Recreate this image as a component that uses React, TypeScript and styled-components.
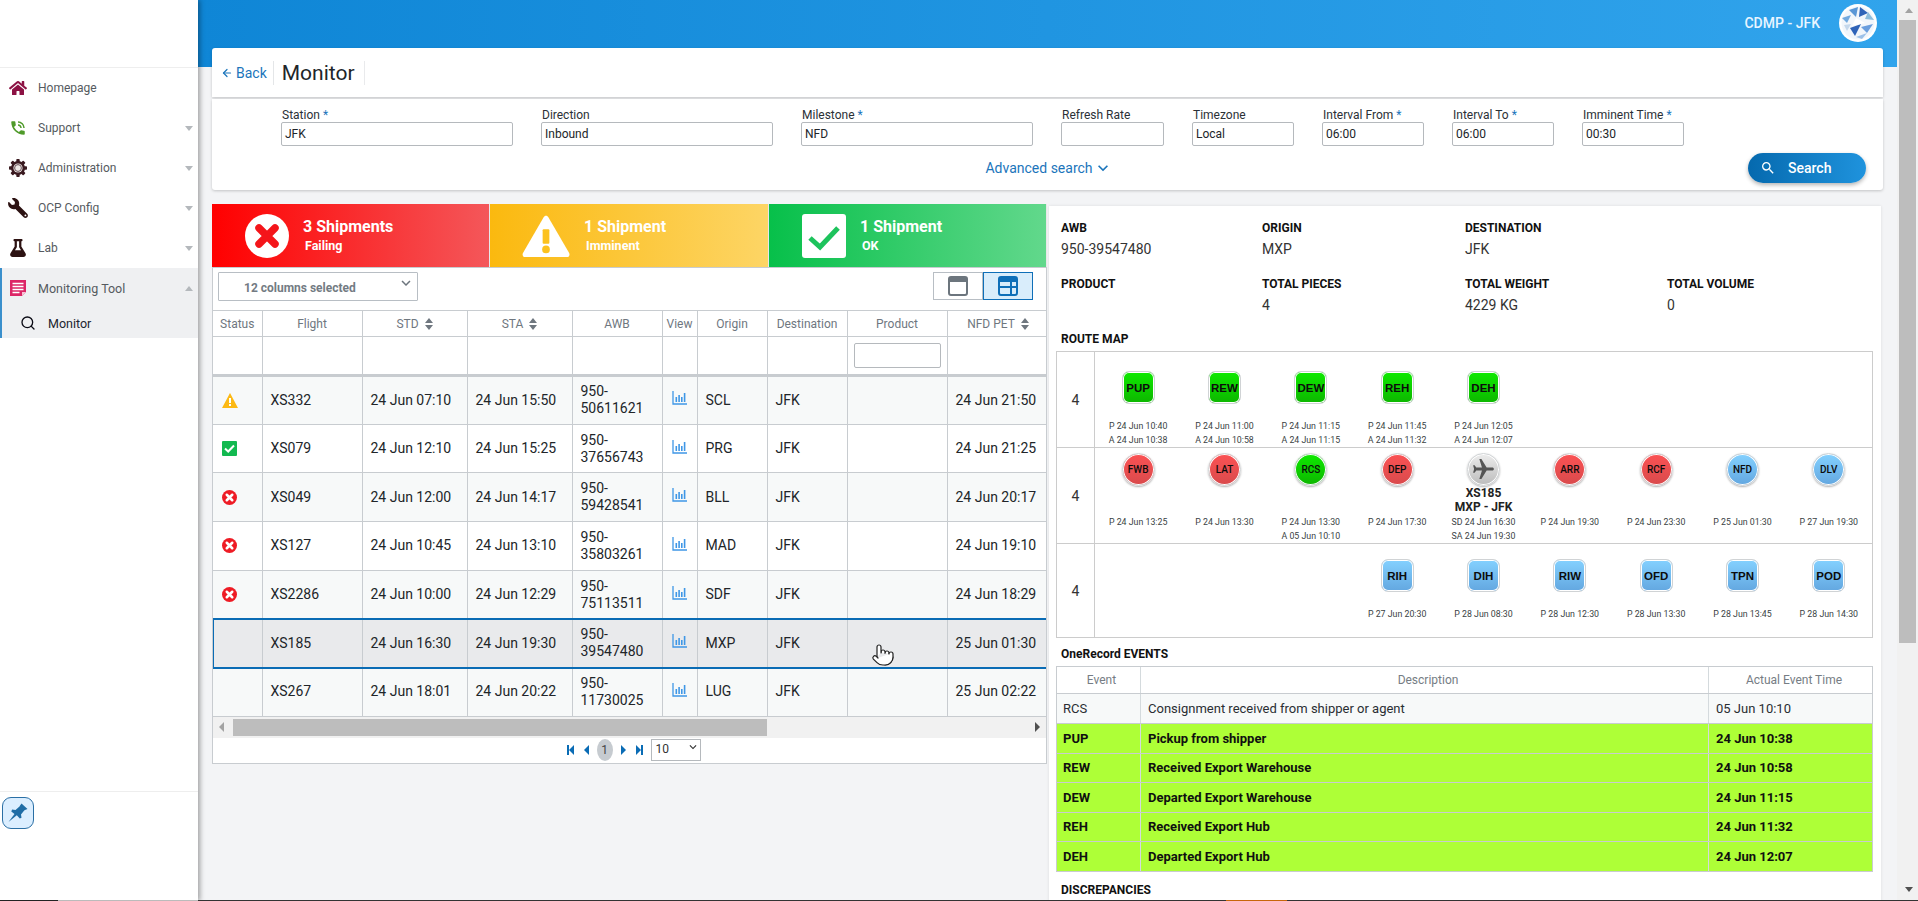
import React from "react";
import styled, { createGlobalStyle } from "styled-components";
import { FaHome, FaWrench, FaFlask } from "react-icons/fa";
import { MdPhoneInTalk, MdSearch, MdKeyboardArrowDown, MdFlight } from "react-icons/md";
import { Pointer, Search as SearchGlyph, ArrowLeft } from "lucide-react";

const Global = createGlobalStyle`
  html, body { margin: 0; padding: 0; height: 100%; overflow: hidden; background: #f3f4f6; }
  body { font-family: Roboto, "Liberation Sans", sans-serif; color: #212529; }
  * { box-sizing: border-box; }
`;

const Page = styled.div`
  position: relative;
  display: flex;
  width: 1918px;
  height: 901px;
  overflow: hidden;
`;

/* ---------- Sidebar ---------- */
const Sidebar = styled.aside`
  width: 198px;
  flex: none;
  height: 901px;
  background: #fff;
  display: flex;
  flex-direction: column;
  box-shadow: 2px 0 5px rgba(0, 0, 0, 0.35);
  z-index: 3;
`;
const SideTop = styled.div`
  height: 68px;
  flex: none;
  border-bottom: 1px solid #eeeeee;
`;
const MenuItem = styled.div`
  height: 40px;
  display: flex;
  align-items: center;
  font-size: 12px;
  color: #555a60;
`;
const MenuIcon = styled.span<{ $c: string; $flip?: boolean }>`
  width: 38px;
  flex: none;
  padding-left: 9px;
  display: flex;
  color: ${(p) => p.$c};
  font-size: 18px;
  & svg {
    ${(p) => (p.$flip ? "transform: scaleX(-1) scale(1.1);" : "")}
  }
`;
const MenuLabel = styled.span`
  flex: 1;
`;
const Caret = styled.i<{ $up?: boolean }>`
  width: 0;
  height: 0;
  margin-right: 5px;
  border-left: 4px solid transparent;
  border-right: 4px solid transparent;
  ${(p) => (p.$up ? "border-bottom: 5px solid #b4b8bc;" : "border-top: 5px solid #b4b8bc;")}
`;
const ActiveGroup = styled.div`
  background: #eff0f2;
  border-left: 2px solid #3a8fcc;
  margin: 0;
`;
const ActiveHead = styled(MenuItem)`
  margin-left: -2px;
  font-size: 12.5px;
`;
const SubItem = styled.div`
  height: 30px;
  display: flex;
  align-items: center;
  padding-left: 18px;
  gap: 12px;
  font-size: 12.5px;
  color: #1c2530;
`;
const SideSpacer = styled.div`
  flex: 1;
`;
const SideFoot = styled.div`
  height: 110px;
  flex: none;
  border-top: 1px solid #eeeeee;
  padding: 5px 2px;
`;
const PinButton = styled.div`
  width: 32px;
  height: 32px;
  border: 1px solid #2a6fa5;
  border-radius: 9px;
  background: #dbeeff;
  display: flex;
  align-items: center;
  justify-content: center;
`;

/* ---------- Main ---------- */
const Main = styled.main`
  width: 1699px;
  flex: none;
  height: 901px;
  overflow: hidden;
`;
const TopBar = styled.header`
  height: 67px;
  background: linear-gradient(90deg, #0f86d6 0%, #31a4ec 100%);
  display: flex;
  justify-content: flex-end;
  align-items: flex-start;
  padding: 4px 20px 0 0;
  gap: 19px;
  color: #e9f5ff;
`;
const UserText = styled.span`
  font-size: 14px;
  font-weight: 500;
  line-height: 38px;
`;
const Content = styled.div`
  margin-top: -19px;
  padding: 0 14px;
`;
const TitleCard = styled.div`
  height: 49px;
  background: #fff;
  border-radius: 3px 3px 0 0;
  box-shadow: 0 1px 3px rgba(0, 0, 0, 0.2);
  display: flex;
  align-items: center;
  padding-left: 9px;
`;
const BackLink = styled.span`
  display: flex;
  align-items: center;
  gap: 3px;
  font-size: 14px;
  color: #1b75bb;
  padding-right: 6px;
  height: 24px;
  border-right: 1px solid #e4e6e8;
`;
const PageTitle = styled.h1`
  margin: 0;
  font-size: 21px;
  font-weight: 400;
  color: #212529;
  padding: 0 8px;
  line-height: 24px;
  width: 91px;
  border-right: 1px solid #e9eaec;
`;
const FilterCard = styled.div`
  margin-top: 2px;
  height: 91px;
  background: #fff;
  border-radius: 0 0 3px 3px;
  box-shadow: 0 1px 3px rgba(0, 0, 0, 0.2);
  padding: 9px 17px 0 69px;
`;
const FieldRow = styled.div`
  display: flex;
  gap: 28px;
`;
const Field = styled.div<{ $w: number }>`
  width: ${(p) => p.$w}px;
  flex: none;
`;
const FieldLabel = styled.label`
  display: block;
  font-size: 12px;
  line-height: 14px;
  padding-left: 1px;
  color: #2b3036;
  & b {
    font-weight: 400;
    color: #1b75bb;
  }
`;
const FieldInput = styled.div`
  height: 24px;
  border: 1px solid #b5b9bd;
  border-radius: 2px;
  font-size: 12px;
  line-height: 22px;
  padding-left: 3px;
  color: #212529;
`;
const SearchRow = styled.div`
  margin-top: 7px;
  margin-left: -69px;
  display: grid;
  grid-template-columns: 1fr auto 1fr;
  align-items: center;
`;
const AdvLink = styled.span`
  grid-column: 2;
  margin-left: 20px;
  display: flex;
  align-items: center;
  gap: 0;
  font-size: 14px;
  color: #1b75bb;
`;
const SearchBtn = styled.button`
  grid-column: 3;
  justify-self: end;
  width: 118px;
  height: 30px;
  border: 0;
  border-radius: 15px;
  background: linear-gradient(90deg, #0569ae, #1f93dd);
  box-shadow: 0 2px 4px rgba(0, 0, 0, 0.3);
  color: #fff;
  font: 500 14px Roboto, sans-serif;
  display: flex;
  align-items: center;
  padding: 0 0 0 12px;
  gap: 12px;
`;
const Panels = styled.div`
  margin-top: 14px;
  display: flex;
  align-items: flex-start;
  gap: 2px;
`;

/* ---------- Left panel ---------- */
const LeftPanel = styled.section`
  position: relative;
  width: 835px;
  flex: none;
  background: #fff;
  border-bottom: 1px solid #c8ccd0;
`;
const Tiles = styled.div`
  display: flex;
  height: 64px;
  border-bottom: 1px solid #c8ccd0;
`;
const Tile = styled.div<{ $from: string; $to: string; $w: number; $pad: number }>`
  width: ${(p) => p.$w}px;
  flex: none;
  background: linear-gradient(90deg, ${(p) => p.$from}, ${(p) => p.$to});
  display: flex;
  align-items: center;
  padding-left: ${(p) => p.$pad}px;
  gap: 14px;
  color: #fff;
  border-right: 1px solid #e8e8e8;
`;
const TileText = styled.div`
  display: flex;
  flex-direction: column;
`;
const TileTitle = styled.span`
  font-size: 16px;
  font-weight: 700;
  line-height: 20px;
`;
const TileSub = styled.span`
  font-size: 12.5px;
  font-weight: 700;
  line-height: 17px;
  padding-left: 2px;
`;
const TableBox = styled.div`
  border-left: 1px solid #c8ccd0;
  border-right: 1px solid #c8ccd0;
`;
const Toolbar = styled.div`
  height: 42px;
  display: flex;
  justify-content: space-between;
  align-items: flex-start;
  padding: 4px 13px 0 5px;
`;
const ColumnSelect = styled.div`
  position: relative;
  width: 200px;
  height: 29px;
  border: 1px solid #b8bec4;
  border-radius: 1px;
  font-size: 12px;
  font-weight: 700;
  color: #737b83;
  line-height: 30px;
  padding-left: 25px;
  & svg {
    position: absolute;
    right: 2px;
    top: 1px;
    color: #6c757d;
  }
`;
const ViewToggle = styled.div`
  display: flex;
`;
const ViewBtn = styled.div<{ $on?: boolean }>`
  width: 50px;
  height: 28px;
  display: flex;
  align-items: center;
  justify-content: center;
  border: 1px solid ${(p) => (p.$on ? "#0f6fb8" : "#b8bec4")};
  background: ${(p) => (p.$on ? "#d9edfb" : "#fff")};
`;
const TableClip = styled.div`
  overflow: hidden;
`;
const Grid = styled.table`
  table-layout: fixed;
  width: 836px;
  border-collapse: collapse;
`;
const Th = styled.th`
  height: 26px;
  padding: 0;
  font-size: 12px;
  font-weight: 400;
  color: #6f777f;
  text-align: center;
  border: 1px solid #c8ccd0;
  &:first-child {
    border-left: 0;
  }
  white-space: nowrap;
`;
const SortGlyph = styled.svg`
  margin-left: 6px;
  vertical-align: -2px;
`;
const FilterCell = styled.td`
  height: 39px;
  padding: 0 6px;
  border: 1px solid #c8ccd0;
  border-bottom: 3px solid #c8ccd0;
  &:first-child {
    border-left: 0;
  }
`;
const FilterInput = styled.div`
  height: 25px;
  border: 1px solid #b5b9bd;
  border-radius: 2px;
  background: #fff;
`;
const Row = styled.tr<{ $alt?: boolean; $sel?: boolean }>`
  background: ${(p) => (p.$sel ? "#e9eaec" : p.$alt ? "#f7f9f9" : "#fff")};
  ${(p) => (p.$sel ? "outline: 2px solid #0a6cb5; outline-offset: -1px;" : "")}
`;
const Td = styled.td<{ $flush?: boolean }>`
  height: 48.7px;
  padding: 0 ${(p) => (p.$flush ? "0" : "8px")};
  font-size: 14px;
  line-height: 17px;
  color: #212529;
  border: 1px solid #c8ccd0;
  &:first-child {
    border-left: 0;
  }
  text-align: ${(p) => (p.$flush ? "center" : "left")};
`;
const StatusWrap = styled.span`
  display: flex;
  padding-left: 9px;
`;
const HScroll = styled.div`
  height: 21px;
  background: #f1f1f1;
  display: flex;
  align-items: center;
`;
const HArrow = styled.i<{ $dir: "l" | "r" }>`
  width: 0;
  height: 0;
  border-top: 5px solid transparent;
  border-bottom: 5px solid transparent;
  ${(p) => (p.$dir === "l" ? "border-right: 5px solid #a3a3a3; margin: 0 6px 0 6px;" : "border-left: 5px solid #505050; margin: 0 6px 0 auto;")}
`;
const HThumb = styled.div`
  width: 534px;
  height: 17px;
  margin-left: 3px;
  background: #bdbdbd;
`;
const Pager = styled.div`
  height: 25px;
  display: flex;
  align-items: center;
  justify-content: center;
  gap: 7px;
  padding-left: 8px;
`;
const PageChip = styled.span`
  width: 16px;
  height: 22px;
  border-radius: 50%;
  background: #c6cbd0;
  font-size: 12px;
  line-height: 22px;
  text-align: center;
  color: #444;
`;
const PageSize = styled.div`
  width: 50px;
  height: 22px;
  border: 1px solid #b5b9bd;
  font-size: 12px;
  line-height: 18px;
  padding-left: 4px;
  color: #333;
  display: flex;
  justify-content: space-between;
  margin-left: 1px;
`;
const HandCursor = styled.div`
  position: absolute;
  left: 659px;
  top: 439px;
  display: flex;
`;

/* ---------- Right panel ---------- */
const RightPanel = styled.section`
  width: 832px;
  flex: none;
  margin-top: 2px;
  background: #fff;
  height: 700px;
  padding: 0 7px;
  box-shadow: 0 0 3px rgba(0, 0, 0, 0.1);
`;
const InfoGrid = styled.div`
  display: grid;
  grid-template-columns: 201px 203px 202px 202px;
  padding: 14px 0 0 5px;
  row-gap: 13px;
`;
const InfoItem = styled.div`
  height: 43px;
`;
const InfoLabel = styled.div`
  font-size: 12px;
  font-weight: 700;
  line-height: 16px;
  color: #111;
`;
const InfoValue = styled.div`
  font-size: 14px;
  line-height: 17px;
  margin-top: 5px;
  color: #333;
`;
const SectionTitle = styled.h3<{ $top: number }>`
  margin: ${(p) => p.$top}px 0 0 5px;
  font-size: 12px;
  font-weight: 700;
  line-height: 16px;
  color: #111;
`;
const RouteTable = styled.div`
  margin-top: 4px;
  width: 817px;
  border: 1px solid #ccc;
`;
const RouteRow = styled.div<{ $h: number }>`
  display: flex;
  height: ${(p) => p.$h}px;
  & + & {
    border-top: 1px solid #ccc;
  }
`;
const RouteCount = styled.div`
  width: 38px;
  flex: none;
  border-right: 1px solid #ccc;
  display: flex;
  align-items: center;
  justify-content: center;
  font-size: 14px;
  color: #333;
`;
const RouteSteps = styled.div<{ $pad: number }>`
  flex: 1;
  display: grid;
  grid-template-columns: repeat(9, 1fr);
  padding-top: ${(p) => p.$pad}px;
`;
const Step = styled.div`
  display: flex;
  flex-direction: column;
  align-items: center;
`;
const Badge = styled.div<{ $round?: boolean; $from: string; $to: string }>`
  width: 33px;
  height: 33px;
  border-radius: ${(p) => (p.$round ? "50%" : "7px")};
  border: 1px solid #d0d3d5;
  box-shadow: inset 0 0 0 1px #fff ${(p) => (p.$round ? ", 0 1px 2px rgba(0,0,0,.3)" : "")};
  background: linear-gradient(180deg, ${(p) => p.$from}, ${(p) => p.$to});
  display: flex;
  align-items: center;
  justify-content: center;
  font-family: ${(p) => (p.$round ? "Roboto, sans-serif" : '"Liberation Sans", sans-serif')};
  font-weight: ${(p) => (p.$round ? 500 : 700)};
  font-size: ${(p) => (p.$round ? "10px" : "11.5px")};
  color: #0c0c0c;
  flex: none;
`;
const FlightName = styled.div`
  font-size: 12px;
  font-weight: 700;
  line-height: 14px;
  text-align: center;
  color: #222;
  white-space: nowrap;
`;
const Times = styled.div<{ $top: number }>`
  margin-top: ${(p) => p.$top}px;
  font-size: 8.8px;
  line-height: 14px;
  color: #3a3f44;
  text-align: center;
  white-space: nowrap;
`;
const EventTable = styled.div`
  margin-top: 4px;
  width: 817px;
  border: 1px solid #c8ccd0;
`;
const EventRow = styled.div<{ $green?: boolean; $head?: boolean; $h?: number }>`
  display: grid;
  grid-template-columns: 83px 568px 1fr;
  height: ${(p) => p.$h ?? 29.5}px;
  align-items: stretch;
  font-size: ${(p) => (p.$head ? "12px" : "13px")};
  font-weight: ${(p) => (p.$green ? 700 : 400)};
  color: ${(p) => (p.$head ? "#767d84" : p.$green ? "#101010" : "#2a2e33")};
  background: ${(p) => (p.$green ? "#aeff37" : p.$head ? "#fff" : "#f7f9f9")};
  & + & {
    border-top: 1px solid #c8ccd0;
  }
`;
const EventCell = styled.div<{ $center?: boolean }>`
  display: flex;
  align-items: center;
  padding-left: 6px;
  justify-content: ${(p) => (p.$center ? "center" : "flex-start")};
  & + & {
    border-left: 1px solid #d4dadd;
    padding-left: ${(p) => (p.$center ? "0" : "7px")};
  }
`;

/* ---------- Page scrollbar and the bottom sliver ---------- */
const PageScroll = styled.div`
  width: 21px;
  flex: none;
  height: 901px;
  background: #f1f1f1;
  display: flex;
  flex-direction: column;
  align-items: flex-end;
`;
const ScrollArrow = styled.i<{ $down?: boolean }>`
  display: block;
  margin: ${(p) => (p.$down ? "auto 5px 9px 0" : "8px 5px 0 0")};
  width: 0;
  height: 0;
  border-left: 4px solid transparent;
  border-right: 4px solid transparent;
  ${(p) => (p.$down ? "border-top: 5px solid #505050;" : "border-bottom: 5px solid #a3a3a3;")}
`;
const ScrollThumb = styled.div`
  width: 17px;
  height: 623px;
  margin: 7px 2px 0 0;
  background: #bdbdbd;
`;
const Sliver = styled.div`
  position: absolute;
  left: 0;
  right: 0;
  bottom: 0;
  height: 1px;
  display: flex;
  z-index: 5;
`;
const SliverPart = styled.i<{ $w?: number; $c: string }>`
  display: block;
  background: ${(p) => p.$c};
  ${(p) => (p.$w ? `width: ${p.$w}px; flex: none;` : "flex: 1;")}
`;

/* ---------- Drawings ---------- */
const GearIcon = () => (
  <svg width="18" height="18" viewBox="0 0 18 18">
    <g fill="#3a1a20">
      {[0, 45, 90, 135, 180, 225, 270, 315].map((a) => (
        <rect key={a} x="7.300" y="0" width="3.400" height="4" rx="0.800" transform={`rotate(${a} 9 9)`} />
      ))}
      <circle cx="9" cy="9" r="7" />
    </g>
    <circle cx="9" cy="9" r="4.600" fill="#efe9e6" />
    <circle cx="9" cy="9" r="3.400" fill="none" stroke="#5a4048" strokeWidth="0.900" />
  </svg>
);
const DocIcon = () => (
  <svg width="18" height="18" viewBox="0 0 18 18">
    <path d="M1 1h16v12l-4 4H1z" fill="#dc2566" />
    <path d="M3.500 4.500h11M3.500 7.500h11M3.500 10.500h11M3.500 13.500h7" stroke="#fff" strokeWidth="1.400" />
    <path d="M13 17v-4h4z" fill="#f7c3d5" />
  </svg>
);
const PinIcon = () => (
  <svg width="24" height="24" viewBox="0 0 24 24">
    <path
      d="M15.500 2.500l6 5.500-2.500 1-.8 .4-3.200 4 .5 3.300-1.700 .8-3-3.200L2.500 21l6-8-3.200-2.600 .8-1.800 3.400.4 4-3.400.4-.9z"
      fill="#1f6da6"
    />
  </svg>
);
const Logo = () => (
  <svg width="38" height="38" viewBox="0 0 38 38">
    <circle cx="19" cy="19" r="19" fill="#fff" />
    <circle cx="19" cy="19" r="16.500" fill="#f2f6fb" />
    <path d="M10 6l9-3-2 10z" fill="#5b97d6" />
    <path d="M21 3l8 6-9 4z" fill="#2f63b8" />
    <path d="M29 8l6 8-9-1z" fill="#8dbcdc" />
    <path d="M3 14l9-3-4 8z" fill="#72a9df" />
    <path d="M5 21l7-1-4 7z" fill="#c5d8ec" />
    <path d="M11 24l11-4-6 12z" fill="#2f63b8" />
    <path d="M22 23l12-3-6 9z" fill="#6a9ede" />
    <path d="M17 33l11-4-5 6z" fill="#9dc1e8" />
    <path d="M17 14l9 5-13 3z" fill="#fff" />
  </svg>
);
const CrossCircle = ({ size = 44, c = "#fff", x = "#f4151a" }: { size?: number; c?: string; x?: string }) => (
  <svg width={size} height={size} viewBox="0 0 44 44">
    <circle cx="22" cy="22" r="22" fill={c} />
    <path d="M14 14l16 16M30 14L14 30" stroke={x} strokeWidth="7.500" strokeLinecap="round" />
  </svg>
);
const WarnTile = () => (
  <svg width="48" height="44" viewBox="0 0 50 44">
    <path d="M25 1c1 0 2 .6 2.600 1.600l21.500 37c1 1.900 0 4.400-2.400 4.400H3.300C1 44 0 41.500 1 39.600L22.400 2.600C23 1.600 24 1 25 1z" fill="#fff" />
    <rect x="21.500" y="15" width="7" height="15" rx="1" fill="#fcc21d" />
    <circle cx="25" cy="36" r="4" fill="#fcc21d" />
  </svg>
);
const CheckTile = () => (
  <svg width="44" height="44" viewBox="0 0 44 44">
    <rect width="44" height="44" rx="3" fill="#fff" />
    <path d="M8 24l10 9L36 14" stroke="#1dc35c" strokeWidth="5" fill="none" />
  </svg>
);
const WarnSmall = () => (
  <svg width="16" height="15" viewBox="0 0 16 15">
    <path d="M8 0l8 15H0z" fill="#fcb914" />
    <rect x="7" y="5" width="2" height="5" fill="#fff" />
    <rect x="7" y="11" width="2" height="2" fill="#fff" />
  </svg>
);
const CheckSmall = () => (
  <svg width="15" height="15" viewBox="0 0 15 15">
    <rect width="15" height="15" rx="1" fill="#12b950" />
    <path d="M3 7.500l3.200 3L12 4.500" stroke="#fff" strokeWidth="2" fill="none" />
  </svg>
);
const SortIcon = () => (
  <SortGlyph width="8" height="12" viewBox="0 0 8 12">
    <path d="M4 0l4 5H0zM4 12L0 7h8z" fill="#6f777f" />
  </SortGlyph>
);
const BarsIcon = () => (
  <svg width="15" height="14" viewBox="0 0 15 14">
    <path d="M1 0v13h14" stroke="#3f97e6" strokeWidth="1.300" fill="none" />
    <path d="M3.500 6h1.600v5H3.500zM6.300 4h1.600v7H6.300zM9 6h1.600v5H9zM11.800 2h1.600v9h-1.600z" fill="#3f97e6" />
  </svg>
);
const WinIcon = () => (
  <svg width="22" height="22" viewBox="0 0 22 22">
    <rect x="2" y="2" width="18" height="18" rx="2" fill="#fff" stroke="#6c757d" strokeWidth="2" />
    <path d="M2 3h18v4H2z" fill="#6c757d" />
  </svg>
);
const SplitIcon = () => (
  <svg width="22" height="22" viewBox="0 0 22 22">
    <rect x="2" y="2" width="18" height="18" rx="2" fill="none" stroke="#0f6fb8" strokeWidth="2" />
    <path d="M2 3h18v4H2z" fill="#0f6fb8" />
    <path d="M2 12h18M14 7v13" stroke="#0f6fb8" strokeWidth="2" />
  </svg>
);
const PageArrow = ({ dir, end }: { dir: "l" | "r"; end?: boolean }) => (
  <svg width="8" height="10" viewBox="0 0 8 10">
    {dir === "l" ? <path d="M7 0v10L2 5z" fill="#0a6cb5" /> : <path d="M1 0v10l5-5z" fill="#0a6cb5" />}
    {end && (dir === "l" ? <rect x="0" y="0" width="2" height="10" fill="#0a6cb5" /> : <rect x="6" y="0" width="2" height="10" fill="#0a6cb5" />)}
  </svg>
);

/* ---------- Data ---------- */
const fields = [
  { label: "Station", req: true, value: "JFK", w: 232 },
  { label: "Direction", value: "Inbound", w: 232 },
  { label: "Milestone", req: true, value: "NFD", w: 232 },
  { label: "Refresh Rate", value: "", w: 103 },
  { label: "Timezone", value: "Local", w: 102 },
  { label: "Interval From", req: true, value: "06:00", w: 102 },
  { label: "Interval To", req: true, value: "06:00", w: 102 },
  { label: "Imminent Time", req: true, value: "00:30", w: 102 },
];
const cols = [49, 100, 105, 105, 90, 35, 70, 80, 100, 102];
const heads: [string, boolean][] = [
  ["Status", false], ["Flight", false], ["STD", true], ["STA", true], ["AWB", false],
  ["View", false], ["Origin", false], ["Destination", false], ["Product", false], ["NFD PET", true],
];
type Ship = { s?: "w" | "c" | "x"; f: string; std: string; sta: string; awb: string; o: string; pet: string; sel?: boolean };
const ships: Ship[] = [
  { s: "w", f: "XS332", std: "24 Jun 07:10", sta: "24 Jun 15:50", awb: "950-50611621", o: "SCL", pet: "24 Jun 21:50" },
  { s: "c", f: "XS079", std: "24 Jun 12:10", sta: "24 Jun 15:25", awb: "950-37656743", o: "PRG", pet: "24 Jun 21:25" },
  { s: "x", f: "XS049", std: "24 Jun 12:00", sta: "24 Jun 14:17", awb: "950-59428541", o: "BLL", pet: "24 Jun 20:17" },
  { s: "x", f: "XS127", std: "24 Jun 10:45", sta: "24 Jun 13:10", awb: "950-35803261", o: "MAD", pet: "24 Jun 19:10" },
  { s: "x", f: "XS2286", std: "24 Jun 10:00", sta: "24 Jun 12:29", awb: "950-75113511", o: "SDF", pet: "24 Jun 18:29" },
  { f: "XS185", std: "24 Jun 16:30", sta: "24 Jun 19:30", awb: "950-39547480", o: "MXP", pet: "25 Jun 01:30", sel: true },
  { f: "XS267", std: "24 Jun 18:01", sta: "24 Jun 20:22", awb: "950-11730025", o: "LUG", pet: "25 Jun 02:22" },
];
const tones = {
  g: ["#0eea00", "#0db600"],
  r: ["#fb5254", "#d94a4c"],
  b: ["#84d1ff", "#63a7e0"],
  p: ["#ececec", "#bcbcbc"],
};
type StepT = { code?: string; t?: keyof typeof tones; round?: boolean; lines?: string[]; plane?: boolean; empty?: boolean };
const row1: StepT[] = [
  { code: "PUP", t: "g", lines: ["P 24 Jun 10:40", "A 24 Jun 10:38"] },
  { code: "REW", t: "g", lines: ["P 24 Jun 11:00", "A 24 Jun 10:58"] },
  { code: "DEW", t: "g", lines: ["P 24 Jun 11:15", "A 24 Jun 11:15"] },
  { code: "REH", t: "g", lines: ["P 24 Jun 11:45", "A 24 Jun 11:32"] },
  { code: "DEH", t: "g", lines: ["P 24 Jun 12:05", "A 24 Jun 12:07"] },
];
const row2: StepT[] = [
  { code: "FWB", t: "r", round: true, lines: ["P 24 Jun 13:25"] },
  { code: "LAT", t: "r", round: true, lines: ["P 24 Jun 13:30"] },
  { code: "RCS", t: "g", round: true, lines: ["P 24 Jun 13:30", "A 05 Jun 10:10"] },
  { code: "DEP", t: "r", round: true, lines: ["P 24 Jun 17:30"] },
  { plane: true, t: "p", round: true, lines: ["SD 24 Jun 16:30", "SA 24 Jun 19:30"] },
  { code: "ARR", t: "r", round: true, lines: ["P 24 Jun 19:30"] },
  { code: "RCF", t: "r", round: true, lines: ["P 24 Jun 23:30"] },
  { code: "NFD", t: "b", round: true, lines: ["P 25 Jun 01:30"] },
  { code: "DLV", t: "b", round: true, lines: ["P 27 Jun 19:30"] },
];
const row3: StepT[] = [
  { empty: true }, { empty: true }, { empty: true },
  { code: "RIH", t: "b", lines: ["P 27 Jun 20:30"] },
  { code: "DIH", t: "b", lines: ["P 28 Jun 08:30"] },
  { code: "RIW", t: "b", lines: ["P 28 Jun 12:30"] },
  { code: "OFD", t: "b", lines: ["P 28 Jun 13:30"] },
  { code: "TPN", t: "b", lines: ["P 28 Jun 13:45"] },
  { code: "POD", t: "b", lines: ["P 28 Jun 14:30"] },
];
const events = [
  ["PUP", "Pickup from shipper", "24 Jun 10:38"],
  ["REW", "Received Export Warehouse", "24 Jun 10:58"],
  ["DEW", "Departed Export Warehouse", "24 Jun 11:15"],
  ["REH", "Received Export Hub", "24 Jun 11:32"],
  ["DEH", "Departed Export Hub", "24 Jun 12:07"],
];

const RouteLine = ({ steps, h, pad, gap }: { steps: StepT[]; h: number; pad: number; gap: number }) => (
  <RouteRow $h={h}>
    <RouteCount>4</RouteCount>
    <RouteSteps $pad={pad}>
      {steps.map((s, i) =>
        s.empty || !s.t ? (
          <Step key={i} />
        ) : (
          <Step key={i}>
            <Badge $round={s.round} $from={tones[s.t][0]} $to={tones[s.t][1]}>
              {s.plane ? <MdFlight size={25} color="#555" style={{ transform: "rotate(90deg)" }} /> : s.code}
            </Badge>
            {s.plane && (
              <FlightName>
                XS185
                <br />
                MXP - JFK
              </FlightName>
            )}
            <Times $top={s.plane ? 1 : gap}>
              {s.lines?.map((l) => (
                <div key={l}>{l}</div>
              ))}
            </Times>
          </Step>
        )
      )}
    </RouteSteps>
  </RouteRow>
);

export default function App() {
  return (
    <Page>
      <Global />
      <Sidebar>
        <SideTop />
        <MenuItem>
          <MenuIcon $c="#8c1244"><FaHome /></MenuIcon>
          <MenuLabel>Homepage</MenuLabel>
        </MenuItem>
        <MenuItem>
          <MenuIcon $c="#4f9a2a"><MdPhoneInTalk /></MenuIcon>
          <MenuLabel>Support</MenuLabel>
          <Caret />
        </MenuItem>
        <MenuItem>
          <MenuIcon $c="#3a1a20"><GearIcon /></MenuIcon>
          <MenuLabel>Administration</MenuLabel>
          <Caret />
        </MenuItem>
        <MenuItem>
          <MenuIcon $c="#2c1212" $flip><FaWrench /></MenuIcon>
          <MenuLabel>OCP Config</MenuLabel>
          <Caret />
        </MenuItem>
        <MenuItem>
          <MenuIcon $c="#2c1212"><FaFlask /></MenuIcon>
          <MenuLabel>Lab</MenuLabel>
          <Caret />
        </MenuItem>
        <ActiveGroup>
          <ActiveHead>
            <MenuIcon $c="#dc2566"><DocIcon /></MenuIcon>
            <MenuLabel>Monitoring Tool</MenuLabel>
            <Caret $up />
          </ActiveHead>
          <SubItem>
            <SearchGlyph size={16} color="#0a0a14" strokeWidth={2} />
            Monitor
          </SubItem>
        </ActiveGroup>
        <SideSpacer />
        <SideFoot>
          <PinButton><PinIcon /></PinButton>
        </SideFoot>
      </Sidebar>

      <Main>
        <TopBar>
          <UserText>CDMP - JFK</UserText>
          <Logo />
        </TopBar>
        <Content>
          <TitleCard>
            <BackLink><ArrowLeft size={12} strokeWidth={2.4} />Back</BackLink>
            <PageTitle>Monitor</PageTitle>
          </TitleCard>
          <FilterCard>
            <FieldRow>
              {fields.map((f) => (
                <Field key={f.label} $w={f.w}>
                  <FieldLabel>
                    {f.label}
                    {f.req && <b> *</b>}
                  </FieldLabel>
                  <FieldInput>{f.value}</FieldInput>
                </Field>
              ))}
            </FieldRow>
            <SearchRow>
              <AdvLink>Advanced search <MdKeyboardArrowDown size={20} /></AdvLink>
              <SearchBtn><MdSearch size={16} />Search</SearchBtn>
            </SearchRow>
          </FilterCard>

          <Panels>
            <LeftPanel>
              <Tiles>
                <Tile $w={278} $pad={33} $from="#ff0000" $to="#f4575a">
                  <CrossCircle />
                  <TileText>
                    <TileTitle>3 Shipments</TileTitle>
                    <TileSub>Failing</TileSub>
                  </TileText>
                </Tile>
                <Tile $w={279} $pad={32} $from="#fbb90f" $to="#fdd565">
                  <WarnTile />
                  <TileText>
                    <TileTitle>1 Shipment</TileTitle>
                    <TileSub>Imminent</TileSub>
                  </TileText>
                </Tile>
                <Tile $w={278} $pad={33} $from="#07c04a" $to="#62d88c">
                  <CheckTile />
                  <TileText>
                    <TileTitle>1 Shipment</TileTitle>
                    <TileSub>OK</TileSub>
                  </TileText>
                </Tile>
              </Tiles>
              <TableBox>
                <Toolbar>
                  <ColumnSelect>
                    12 columns selected
                    <MdKeyboardArrowDown size={18} />
                  </ColumnSelect>
                  <ViewToggle>
                    <ViewBtn><WinIcon /></ViewBtn>
                    <ViewBtn $on><SplitIcon /></ViewBtn>
                  </ViewToggle>
                </Toolbar>
                <TableClip>
                  <Grid>
                    <colgroup>
                      {cols.map((c, i) => <col key={i} width={c} />)}
                    </colgroup>
                    <thead>
                      <tr>
                        {heads.map(([h, sort]) => (
                          <Th key={h}>{h}{sort && <SortIcon />}</Th>
                        ))}
                      </tr>
                      <tr>
                        {heads.map(([h]) => (
                          <FilterCell key={h}>{h === "Product" && <FilterInput />}</FilterCell>
                        ))}
                      </tr>
                    </thead>
                    <tbody>
                      {ships.map((r, i) => (
                        <Row key={r.f} $alt={i % 2 === 0} $sel={r.sel}>
                          <Td $flush>
                            <StatusWrap>
                              {r.s === "w" && <WarnSmall />}
                              {r.s === "c" && <CheckSmall />}
                              {r.s === "x" && <CrossCircle size={15} c="#ee1c25" x="#fff" />}
                            </StatusWrap>
                          </Td>
                          <Td>{r.f}</Td>
                          <Td>{r.std}</Td>
                          <Td>{r.sta}</Td>
                          <Td>{r.awb}</Td>
                          <Td $flush><BarsIcon /></Td>
                          <Td>{r.o}</Td>
                          <Td>JFK</Td>
                          <Td />
                          <Td>{r.pet}</Td>
                        </Row>
                      ))}
                    </tbody>
                  </Grid>
                </TableClip>
                <HScroll>
                  <HArrow $dir="l" />
                  <HThumb />
                  <HArrow $dir="r" />
                </HScroll>
                <Pager>
                  <PageArrow dir="l" end />
                  <PageArrow dir="l" />
                  <PageChip>1</PageChip>
                  <PageArrow dir="r" />
                  <PageArrow dir="r" end />
                  <PageSize>10<MdKeyboardArrowDown size={14} /></PageSize>
                </Pager>
              </TableBox>
              <HandCursor>
                <Pointer size={24} fill="#fff" color="#222" strokeWidth={1.2} />
              </HandCursor>
            </LeftPanel>

            <RightPanel>
              <InfoGrid>
                <InfoItem><InfoLabel>AWB</InfoLabel><InfoValue>950-39547480</InfoValue></InfoItem>
                <InfoItem><InfoLabel>ORIGIN</InfoLabel><InfoValue>MXP</InfoValue></InfoItem>
                <InfoItem><InfoLabel>DESTINATION</InfoLabel><InfoValue>JFK</InfoValue></InfoItem>
                <InfoItem />
                <InfoItem><InfoLabel>PRODUCT</InfoLabel></InfoItem>
                <InfoItem><InfoLabel>TOTAL PIECES</InfoLabel><InfoValue>4</InfoValue></InfoItem>
                <InfoItem><InfoLabel>TOTAL WEIGHT</InfoLabel><InfoValue>4229 KG</InfoValue></InfoItem>
                <InfoItem><InfoLabel>TOTAL VOLUME</InfoLabel><InfoValue>0</InfoValue></InfoItem>
              </InfoGrid>
              <SectionTitle $top={12}>ROUTE MAP</SectionTitle>
              <RouteTable>
                <RouteLine steps={row1} h={95} pad={19} gap={15} />
                <RouteLine steps={row2} h={96} pad={5} gap={29} />
                <RouteLine steps={row3} h={94} pad={15} gap={15} />
              </RouteTable>
              <SectionTitle $top={8}>OneRecord EVENTS</SectionTitle>
              <EventTable>
                <EventRow $head $h={26}>
                  <EventCell $center>Event</EventCell>
                  <EventCell $center>Description</EventCell>
                  <EventCell $center>Actual Event Time</EventCell>
                </EventRow>
                <EventRow $h={30}>
                  <EventCell>RCS</EventCell>
                  <EventCell>Consignment received from shipper or agent</EventCell>
                  <EventCell>05 Jun 10:10</EventCell>
                </EventRow>
                {events.map(([a, b, c]) => (
                  <EventRow key={a} $green>
                    <EventCell>{a}</EventCell>
                    <EventCell>{b}</EventCell>
                    <EventCell>{c}</EventCell>
                  </EventRow>
                ))}
              </EventTable>
              <SectionTitle $top={10}>DISCREPANCIES</SectionTitle>
            </RightPanel>
          </Panels>
        </Content>
      </Main>

      <PageScroll>
        <ScrollArrow />
        <ScrollThumb />
        <ScrollArrow $down />
      </PageScroll>

      <Sliver>
        <SliverPart $w={58} $c="#222" />
        <SliverPart $w={140} $c="#bbb" />
        <SliverPart $w={1028} $c="#333" />
        <SliverPart $w={61} $c="#c8660a" />
        <SliverPart $c="#333" />
      </Sliver>
    </Page>
  );
}
